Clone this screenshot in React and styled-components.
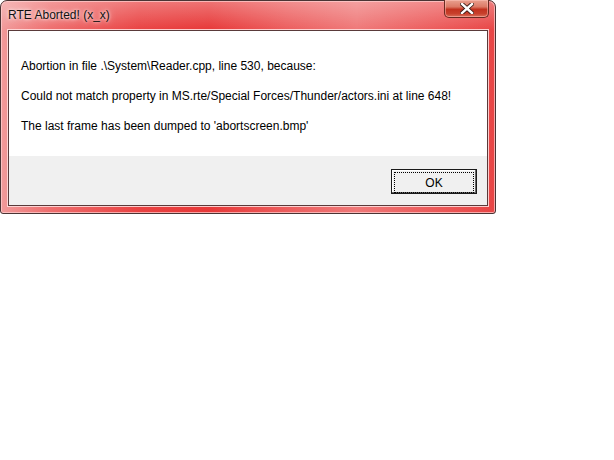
import React from "react";
import styled, { createGlobalStyle } from "styled-components";

const GlobalStyle = createGlobalStyle`
  html, body {
    margin: 0;
    padding: 0;
    background: #ffffff;
  }
`;

const Window = styled.div`
  width: 496px;
  height: 214px;
  box-sizing: border-box;
  display: flex;
  flex-direction: column;
  border: 1px solid #4a3434;
  border-radius: 7px 7px 3px 3px;
  background:
    linear-gradient(
      180deg,
      rgba(255, 255, 255, 0.3) 0px,
      rgba(255, 255, 255, 0) 29px
    ),
    linear-gradient(
      90deg,
      #f19a9a 0%,
      #ee6e6e 10%,
      #e94242 28%,
      #e73838 42%,
      #ec5e5e 58%,
      #ef7878 72%,
      #ec5a5a 88%,
      #e84545 100%
    );
  box-shadow: inset 0 0 0 1px rgba(255, 210, 210, 0.7);
  font-family: "Segoe UI", "Liberation Sans", Arial, sans-serif;
`;

const TitleBar = styled.div`
  height: 29px;
  display: flex;
  align-items: flex-start;
  justify-content: space-between;
  padding-left: 7px;
`;

const Title = styled.span`
  font-size: 12px;
  color: #111;
  line-height: 16px;
  margin-top: 6px;
  text-shadow: 0 0 6px rgba(255, 255, 255, 0.9), 0 0 3px rgba(255, 255, 255, 0.9);
`;

const CloseButton = styled.div`
  width: 45px;
  height: 18px;
  margin-right: 6px;
  margin-top: -1px;
  box-sizing: border-box;
  display: flex;
  align-items: center;
  justify-content: center;
  border: 1px solid #6b2a22;
  border-top: none;
  border-radius: 0 0 5px 5px;
  background: linear-gradient(
    180deg,
    #e9a08f 0%,
    #dc7a66 40%,
    #c2321f 55%,
    #c8402c 80%,
    #d9705a 100%
  );
  box-shadow: inset 0 0 0 1px rgba(255, 200, 190, 0.5);
`;

const Client = styled.div`
  flex: 1;
  margin: 0 7px 7px 7px;
  display: flex;
  flex-direction: column;
  border: 1px solid #5a3a3a;
  box-shadow: 0 0 0 1px rgba(255, 220, 220, 0.9);
  background: #ffffff;
`;

const Message = styled.div`
  flex: 1;
  padding: 28px 0 0 12px;
  background: #ffffff;
`;

const Line = styled.p`
  margin: 0 0 15px 0;
  font-size: 12px;
  line-height: 15px;
  color: #000;
  font-family: "Segoe UI", "Liberation Sans", Arial, sans-serif;
`;

const Footer = styled.div`
  height: 49px;
  display: flex;
  align-items: flex-start;
  justify-content: flex-end;
  padding: 13px 10px 0 0;
  box-sizing: border-box;
  background: #f0f0f0;
`;

const OkButton = styled.button`
  width: 86px;
  height: 25px;
  box-sizing: border-box;
  padding: 2px;
  border: 1px solid #1a1a1a;
  background: #f0f0f0;
  box-shadow: inset -1px -1px 0 #696969, inset 1px 1px 0 #ffffff;
  font-family: "Segoe UI", "Liberation Sans", Arial, sans-serif;
  font-size: 12px;
  color: #000;
  cursor: default;
`;

const Focus = styled.span`
  display: flex;
  align-items: center;
  justify-content: center;
  height: 100%;
  border: 1px dotted #000;
`;

function CloseGlyph() {
  return (
    <svg width="14" height="11" viewBox="0 0 14 11">
      <path
        d="M2 1 L12 10 M12 1 L2 10"
        stroke="#3a1a14"
        strokeWidth="4.2"
        strokeLinecap="square"
      />
      <path
        d="M2 1 L12 10 M12 1 L2 10"
        stroke="#ffffff"
        strokeWidth="2.4"
        strokeLinecap="square"
      />
    </svg>
  );
}

const lines = [
  "Abortion in file .\\System\\Reader.cpp, line 530, because:",
  "Could not match property in MS.rte/Special Forces/Thunder/actors.ini at line 648!",
  "The last frame has been dumped to 'abortscreen.bmp'",
];

export default function App() {
  return (
    <>
      <GlobalStyle />
      <Window>
        <TitleBar>
          <Title>RTE Aborted! (x_x)</Title>
          <CloseButton>
            <CloseGlyph />
          </CloseButton>
        </TitleBar>
        <Client>
          <Message>
            {lines.map((text) => (
              <Line key={text}>{text}</Line>
            ))}
          </Message>
          <Footer>
            <OkButton>
              <Focus>OK</Focus>
            </OkButton>
          </Footer>
        </Client>
      </Window>
    </>
  );
}
